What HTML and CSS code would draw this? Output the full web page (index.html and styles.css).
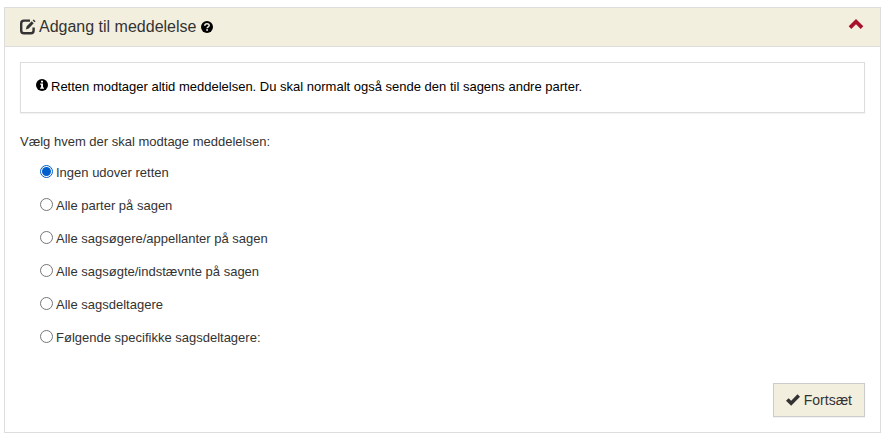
FILE: index.html
```html
<!DOCTYPE html>
<html lang="da">
<head>
<meta charset="utf-8">
<meta name="viewport" content="width=device-width, initial-scale=1">
<title>Adgang til meddelelse</title>
<link rel="stylesheet" href="styles.css">
</head>
<body>
<section class="panel">
  <header class="panel-header">
    <svg class="icon-edit" viewBox="0 0 16 16" aria-hidden="true">
      <path d="M10 1.600H4Q1.200 1.600 1.200 4.500V11.500Q1.200 14.300 4 14.300H10.800Q13.600 14.300 13.600 11.500V8.500" fill="none" stroke="currentColor" stroke-width="2.400"/>
      <path d="M5.800 10.500L6.700 7.300L11.700 2.300L13.700 4.300L8.800 9.500ZM12.600 1.400L13.600 0.400L15.600 2.300L14.600 3.300Z" fill="currentColor"/>
    </svg>
    <h1 class="panel-title">Adgang til meddelelse</h1>
    <svg class="icon-round" viewBox="0 0 12 12" aria-hidden="true">
      <circle cx="6" cy="6" r="6" fill="currentColor"/>
      <path d="M3.800 4.700C3.800 2.200 8.200 2.200 8.200 4.500C8.200 6 6.100 5.700 6.100 7.300" fill="none" stroke="#f3efdf" stroke-width="1.500"/>
      <path d="M5.200 8.200H7V9.800H5.200Z" fill="#f3efdf"/>
    </svg>
    <button class="collapse" type="button" aria-label="Skjul">
      <svg class="icon-chevron" viewBox="0 0 16 10" aria-hidden="true">
        <path d="M0.700 7.200L8 0L15.300 7.200L12.700 9.900L8 5.300L3.300 9.900Z" fill="currentColor"/>
      </svg>
    </button>
  </header>
  <form class="panel-body">
    <p class="notice">
      <svg class="icon-round" viewBox="0 0 12 12" aria-hidden="true">
        <circle cx="6" cy="6" r="6" fill="currentColor"/>
        <path d="M5 1.800H7V3.500H5ZM4.200 4.600H7V8.500H8V9.800H4.200V8.500H5.100V5.800H4.200Z" fill="#fff"/>
      </svg>
      <span>Retten modtager altid meddelelsen. Du skal normalt også sende den til sagens andre parter.</span>
    </p>
    <fieldset class="recipients">
      <legend class="question">Vælg hvem der skal modtage meddelelsen:</legend>
      <label class="option"><input type="radio" name="recipient" checked><span>Ingen udover retten</span></label>
      <label class="option"><input type="radio" name="recipient"><span>Alle parter på sagen</span></label>
      <label class="option"><input type="radio" name="recipient"><span>Alle sagsøgere/appellanter på sagen</span></label>
      <label class="option"><input type="radio" name="recipient"><span>Alle sagsøgte/indstævnte på sagen</span></label>
      <label class="option"><input type="radio" name="recipient"><span>Alle sagsdeltagere</span></label>
      <label class="option"><input type="radio" name="recipient"><span>Følgende specifikke sagsdeltagere:</span></label>
    </fieldset>
    <div class="actions">
      <button class="submit" type="submit">
        <svg class="icon-check" viewBox="0 0 14 12" aria-hidden="true">
          <path d="M0 6.800L2.600 4.200L5.200 6.700L11.500 0.300L14 2.800L5.200 11.700Z" fill="currentColor"/>
        </svg>
        <span>Fortsæt</span>
      </button>
    </div>
  </form>
</section>
</body>
</html>
```
FILE: styles.css
```css
* {
  box-sizing: border-box;
}

body {
  margin: 7px 8px 0 4px;
  background: #fff;
  color: #333;
  font: 13px/18px "Liberation Sans", Arial, sans-serif;
}

.panel {
  border: 1px solid #ddd;
}

.panel-header {
  display: flex;
  align-items: center;
  height: 39px;
  padding: 0 16px 0 15px;
  border-bottom: 1px solid #ddd;
  background: #f3efdf;
}

.panel-title {
  margin: 0 5px 0 3px;
  font-size: 16px;
  font-weight: 400;
  line-height: 20px;
}

.icon-edit {
  width: 16px;
  height: 16px;
}

.icon-round {
  flex: none;
  width: 12px;
  height: 12px;
  color: #000;
}

.collapse {
  display: flex;
  margin: 0 0 6px auto;
  padding: 0;
  border: 0;
  background: none;
  color: #a9112b;
}

.icon-chevron {
  width: 16px;
  height: 10px;
}

.panel-body {
  padding: 15px;
}

.notice {
  display: flex;
  gap: 3px;
  margin: 0 0 20px;
  padding: 15px 15px 16px;
  border: 1px solid #ddd;
  box-shadow: 0 1px 1px rgba(0, 0, 0, 0.05);
  color: #000;
}

.notice .icon-round {
  margin-top: 1px;
}

.recipients {
  margin: 0;
  padding: 0 0 0 20px;
  border: 0;
}

.question {
  margin: 0 0 13px -20px;
  padding: 0;
}

.option {
  display: flex;
  gap: 3px;
  width: fit-content;
  margin-bottom: 15px;
}

.option input {
  appearance: none;
  width: 13px;
  height: 13px;
  margin: 1px 0 0;
  border: 1px solid #767676;
  border-radius: 50%;
  background: #fff;
}

.option input:checked {
  padding: 1px;
  border-color: #005fcc;
  background: #005fcc content-box;
}

.actions {
  display: flex;
  justify-content: flex-end;
  margin-top: 21px;
}

.submit {
  display: flex;
  align-items: center;
  gap: 4px;
  height: 34px;
  padding: 0 12px;
  border: 1px solid #ccc;
  background: #f3efdf;
  box-shadow: 0 1px 1px rgba(0, 0, 0, 0.05);
  color: #333;
  font: 14px/20px "Liberation Sans", Arial, sans-serif;
}

.icon-check {
  width: 14px;
  height: 12px;
}
```
